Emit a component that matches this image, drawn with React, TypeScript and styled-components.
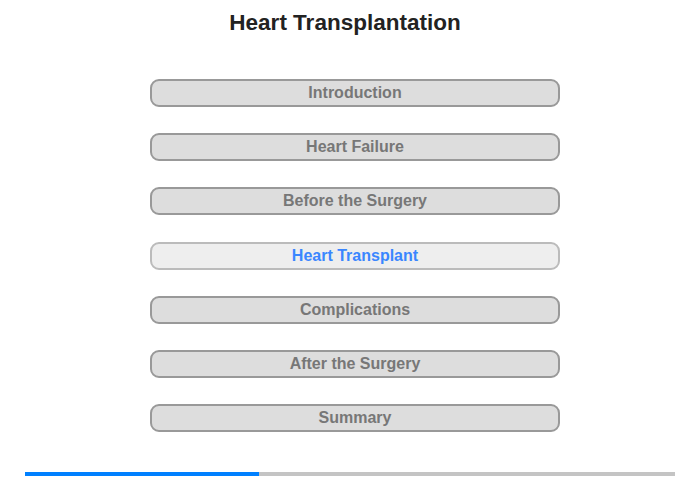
import React, { FunctionComponent } from 'react';
import styled, { createGlobalStyle } from 'styled-components';

const GlobalStyle = createGlobalStyle`
    html, body {
        margin: 0;
        padding: 0;
        background: #ffffff;
        font-family: "Liberation Sans", Arial, sans-serif;
    }
`;

const Page = styled.div`
    width: 700px;
    height: 480px;
    display: flex;
    flex-direction: column;
    align-items: center;
    box-sizing: border-box;
`;

const Title = styled.h1`
    margin: 10px 0 0 -10px;
    height: 26px;
    line-height: 26px;
    font-size: 22.5px;
    font-weight: bold;
    color: #222222;
`;

const Menu = styled.nav`
    margin: 43px 0 0 10px;
    display: flex;
    flex-direction: column;
    gap: 26.2px;
`;

const MenuButton = styled.div<{ $active?: boolean }>`
    width: 410px;
    height: 28px;
    box-sizing: border-box;
    border: 2px solid ${p => (p.$active ? '#bbbbbb' : '#999999')};
    border-radius: 9px;
    background: ${p => (p.$active ? '#eeeeee' : '#dddddd')};
    color: ${p => (p.$active ? '#3a86ff' : '#777777')};
    font-size: 16px;
    font-weight: bold;
    display: flex;
    align-items: center;
    justify-content: center;
    cursor: pointer;
`;

const Progress = styled.div`
    margin-top: auto;
    margin-bottom: 4px;
    width: 650px;
    height: 4px;
    background: #c4c4c4;
    display: flex;
`;

const ProgressFill = styled.div`
    height: 100%;
    background: #0080ff;
`;

const items = [
    'Introduction',
    'Heart Failure',
    'Before the Surgery',
    'Heart Transplant',
    'Complications',
    'After the Surgery',
    'Summary',
];

const App: FunctionComponent<{}> = () => {
    const active = 3;
    const done = 234 / 650;
    return (
        <Page>
            <GlobalStyle />
            <Title>Heart Transplantation</Title>
            <Menu>
                {items.map((label, i) => (
                    <MenuButton key={label} $active={i === active}>
                        {label}
                    </MenuButton>
                ))}
            </Menu>
            <Progress>
                <ProgressFill style={{ width: `${done * 100}%` }} />
            </Progress>
        </Page>
    );
};

export default App;
